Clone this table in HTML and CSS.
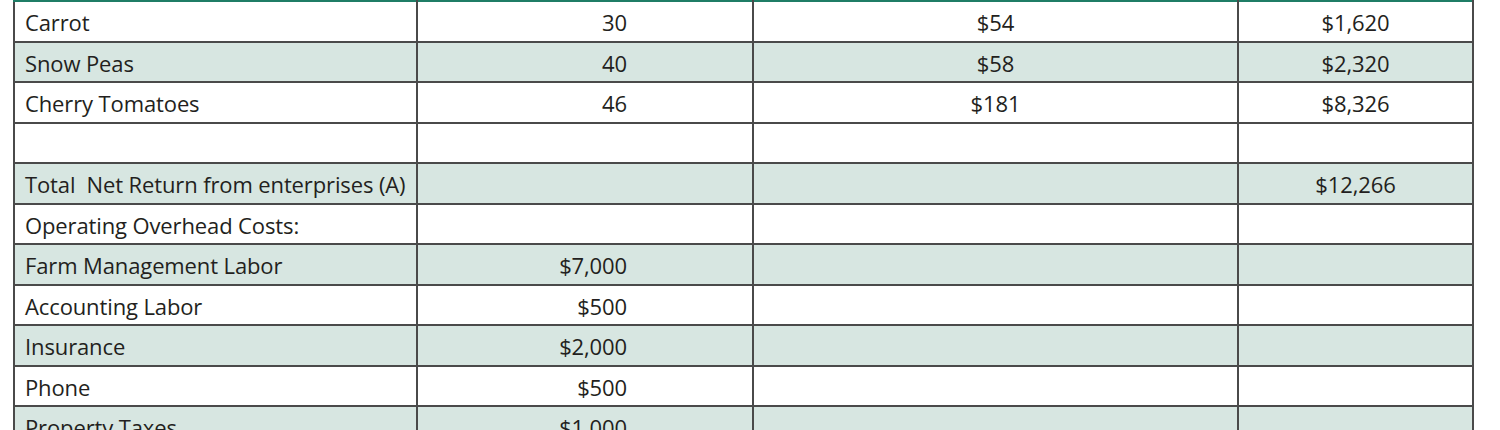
FILE: index.html
```html
<!DOCTYPE html>
<html>
<head>
<meta charset="utf-8">
<link rel="stylesheet" href="styles.css">
</head>
<body>
<table class="budget">
  <colgroup>
    <col class="c-name">
    <col class="c-qty">
    <col class="c-price">
    <col class="c-total">
  </colgroup>
  <tbody>
    <tr><td class="name">Carrot</td><td class="qty">30</td><td class="mid">$54</td><td class="mid">$1,620</td></tr>
    <tr class="shade"><td class="name">Snow Peas</td><td class="qty">40</td><td class="mid">$58</td><td class="mid">$2,320</td></tr>
    <tr><td class="name">Cherry Tomatoes</td><td class="qty">46</td><td class="mid">$181</td><td class="mid">$8,326</td></tr>
    <tr><td class="name"></td><td class="qty"></td><td class="mid"></td><td class="mid"></td></tr>
    <tr class="shade"><td class="name">Total&nbsp; Net Return from enterprises (A)</td><td class="qty"></td><td class="mid"></td><td class="mid">$12,266</td></tr>
    <tr><td class="name">Operating Overhead Costs:</td><td class="qty"></td><td class="mid"></td><td class="mid"></td></tr>
    <tr class="shade"><td class="name">Farm Management Labor</td><td class="qty">$7,000</td><td class="mid"></td><td class="mid"></td></tr>
    <tr><td class="name">Accounting Labor</td><td class="qty">$500</td><td class="mid"></td><td class="mid"></td></tr>
    <tr class="shade"><td class="name">Insurance</td><td class="qty">$2,000</td><td class="mid"></td><td class="mid"></td></tr>
    <tr><td class="name">Phone</td><td class="qty">$500</td><td class="mid"></td><td class="mid"></td></tr>
    <tr class="shade"><td class="name">Property Taxes</td><td class="qty">$1,000</td><td class="mid"></td><td class="mid"></td></tr>
  </tbody>
</table>
</body>
</html>
```
FILE: styles.css
```css
html, body {
  margin: 0;
  padding: 0;
  background: #ffffff;
}
body {
  padding-left: 13px;
  font-family: "Open Sans", "Liberation Sans", sans-serif;
  color: #231f20;
}
.budget {
  border-collapse: collapse;
  table-layout: fixed;
  width: 1459px;
  border-top: 2px solid #1f7d66;
  font-size: 22px;
  letter-spacing: -0.12px;
}
.c-name { width: 403px; }
.c-qty { width: 336px; }
.c-price { width: 485px; }
.c-total { width: 235px; }
.budget td {
  border: 2px solid #4a4a4a;
  height: 36.5px;
  padding: 2px 0 0 0;
  white-space: nowrap;
  line-height: 1;
}
.budget tr:first-child td {
  border-top: 2px solid #1f7d66;
}
.shade td {
  background: #d7e6e1;
}
.name {
  padding-left: 10px !important;
  text-align: left;
}
.qty {
  text-align: right;
  padding-right: 125px !important;
}
.mid {
  text-align: center;
}
```
